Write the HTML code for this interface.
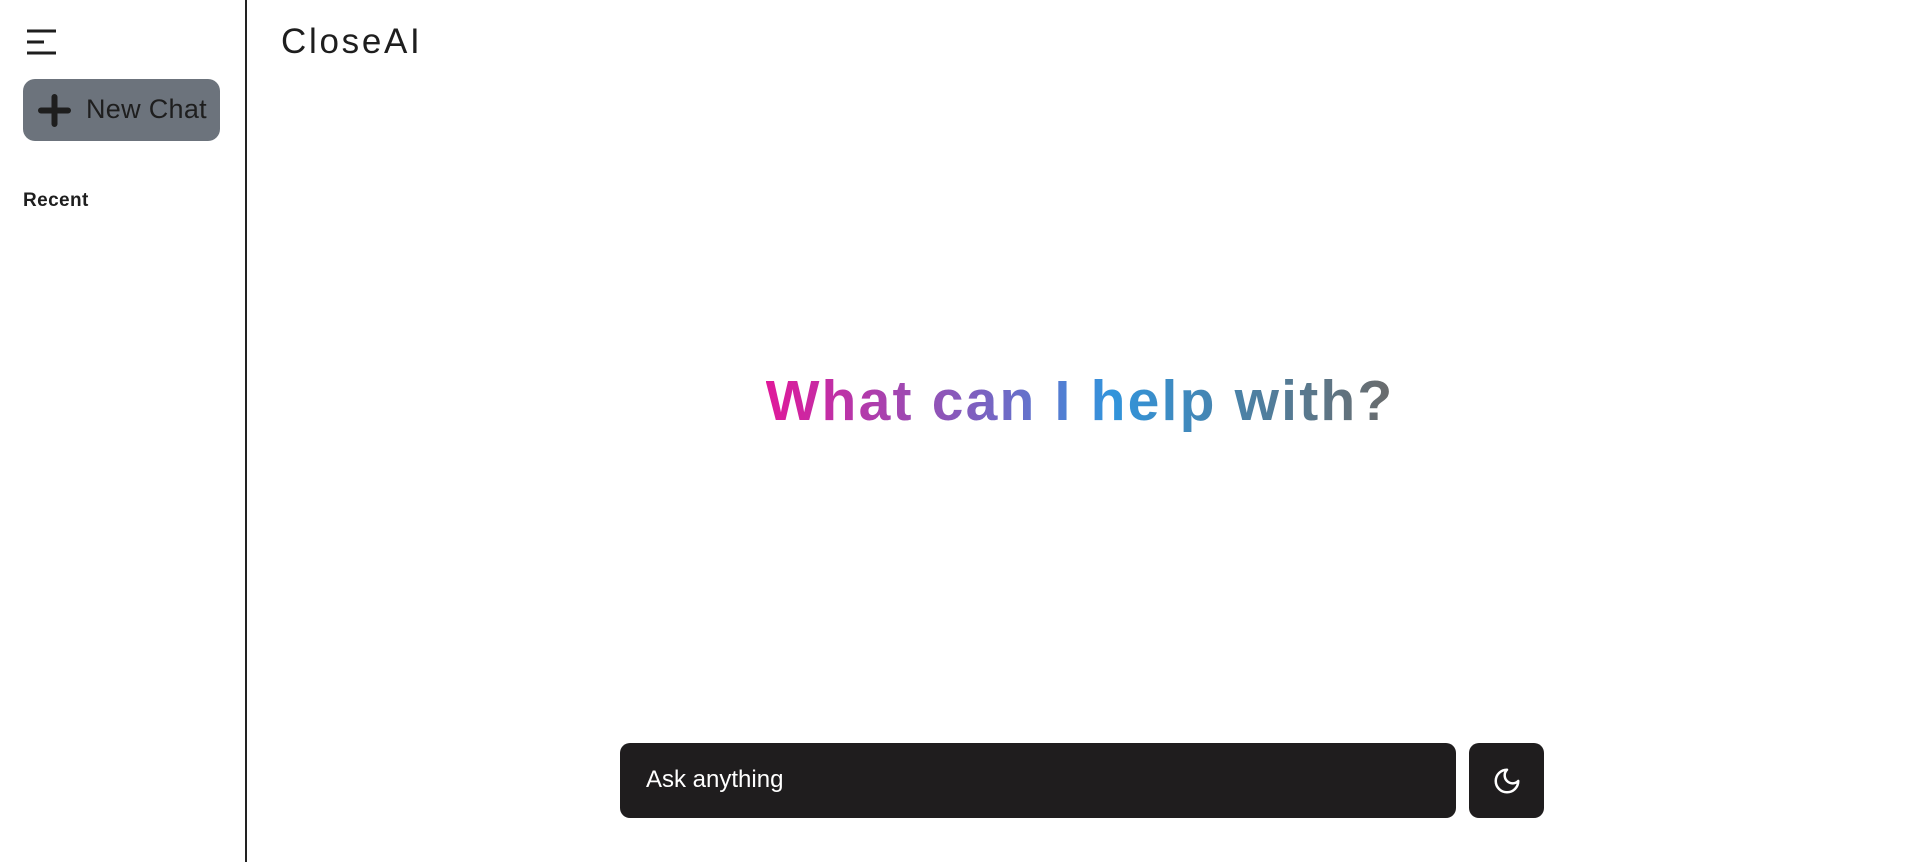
<!DOCTYPE html>
<html><head><style>
html,body{margin:0;padding:0;width:1914px;height:862px;background:#fff;overflow:hidden;font-family:"Liberation Sans",sans-serif;}
.side{position:absolute;left:0;top:0;width:245px;height:862px;border-right:2px solid #222;}
.ham{position:absolute;left:27px;top:29px;}
.btn{position:absolute;left:23px;top:79px;width:197px;height:62px;background:#6c737c;border-radius:12px;}
.btn .t{position:absolute;left:63px;top:15px;font-size:27px;color:#1e1e1e;letter-spacing:0.3px;}
.recent{position:absolute;left:23px;top:190px;font-size:19px;font-weight:bold;color:#1e1e1e;letter-spacing:0.4px;}
.logo{position:absolute;left:281px;top:22px;font-size:35px;color:#1e1e1e;letter-spacing:2.7px;}
h1{position:absolute;left:246px;width:1668px;top:368px;margin:0;text-align:center;font-size:57px;font-weight:bold;}
h1 span{background:linear-gradient(90deg,#e0189a 0%,#8e55b8 28%,#5a78d0 45%,#3194dc 55%,#4a82a8 75%,#6b6b6b 100%);-webkit-background-clip:text;background-clip:text;color:transparent;letter-spacing:2.2px;}
.inp{position:absolute;left:620px;top:743px;width:836px;height:75px;background:#1f1d1e;border-radius:10px;}
.inp .t{position:absolute;left:26px;top:23px;font-size:24px;color:#fff;}
.moon{position:absolute;left:1469px;top:743px;width:75px;height:75px;background:#1f1d1e;border-radius:10px;}
</style></head><body>
<div class="side">
<svg class="ham" width="30" height="26" viewBox="0 0 30 26"><path d="M0 2H29M0 13H17M0 24H29" stroke="#1e1e1e" stroke-width="3"/></svg>
<div class="btn"><svg style="position:absolute;left:15px;top:15px" width="33" height="33" viewBox="0 0 33 33"><path d="M16.5 3V30M3 16.5H30" stroke="#1e1e1e" stroke-width="6" stroke-linecap="round"/></svg><div class="t">New Chat</div></div>
<div class="recent">Recent</div>
</div>
<div class="logo">CloseAI</div>
<h1><span>What can I help with?</span></h1>
<div class="inp"><div class="t">Ask anything</div></div>
<div class="moon"><svg style="position:absolute;left:23px;top:23px" width="30" height="30" viewBox="0 0 24 24"><path d="M12 3a6 6 0 0 0 9 9 9 9 0 1 1-9-9z" fill="none" stroke="#fff" stroke-width="2" stroke-linejoin="round"/></svg></div>
</body></html>
